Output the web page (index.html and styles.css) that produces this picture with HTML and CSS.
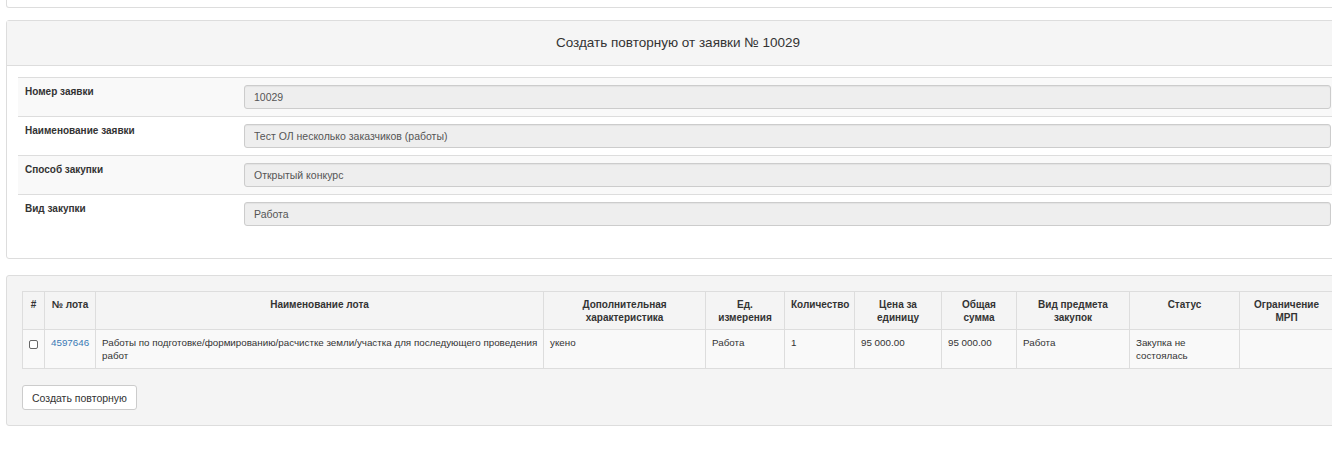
FILE: index.html
```html
<!DOCTYPE html>
<html lang="ru">
<head>
  <meta charset="UTF-8">
  <meta name="viewport" content="width=device-width, initial-scale=1.0">
  <title>Создать повторную</title>
  <link rel="stylesheet" href="styles.css">
</head>
<body>
  <div class="panel panel_top"></div>

  <div class="panel">
    <div class="panel_head">Создать повторную от заявки № 10029</div>
    <div class="panel_body">
      <table class="forma">
        <tr>
          <td class="nazev">Номер заявки</td>
          <td><input class="pole" type="text" value="10029" disabled></td>
        </tr>
        <tr>
          <td class="nazev">Наименование заявки</td>
          <td><input class="pole" type="text" value="Тест ОЛ несколько заказчиков (работы)" disabled></td>
        </tr>
        <tr>
          <td class="nazev">Способ закупки</td>
          <td><input class="pole" type="text" value="Открытый конкурс" disabled></td>
        </tr>
        <tr>
          <td class="nazev">Вид закупки</td>
          <td><input class="pole" type="text" value="Работа" disabled></td>
        </tr>
      </table>
    </div>
  </div>

  <div class="panel panel_well">
    <table class="loty">
      <colgroup>
        <col style="width: 22px">
        <col style="width: 51px">
        <col style="width: 448px">
        <col style="width: 162px">
        <col style="width: 79px">
        <col style="width: 70px">
        <col style="width: 87px">
        <col style="width: 75px">
        <col style="width: 113px">
        <col style="width: 110px">
        <col>
      </colgroup>
      <thead>
        <tr>
          <th>#</th>
          <th>№ лота</th>
          <th>Наименование лота</th>
          <th>Дополнительная характеристика</th>
          <th>Ед. измерения</th>
          <th>Количество</th>
          <th>Цена за единицу</th>
          <th>Общая сумма</th>
          <th>Вид предмета закупок</th>
          <th>Статус</th>
          <th>Ограничение МРП</th>
        </tr>
      </thead>
      <tbody>
        <tr>
          <td><input class="zaskrt" type="checkbox"></td>
          <td><a href="#">4597646</a></td>
          <td>Работы по подготовке/формированию/расчистке земли/участка для последующего проведения работ</td>
          <td>укено</td>
          <td>Работа</td>
          <td>1</td>
          <td>95 000.00</td>
          <td>95 000.00</td>
          <td>Работа</td>
          <td>Закупка не состоялась</td>
          <td></td>
        </tr>
      </tbody>
    </table>

    <button class="tlacitko">Создать повторную</button>
  </div>
</body>
</html>
```

FILE: styles.css
```css
html, body {
  margin: 0;
  padding: 0;
}
body {
  background-color: #fff;
  font-family: "Liberation Sans", Arial, sans-serif;
  font-size: 10px;
  color: #333;
  overflow: hidden;
  padding-left: 6px;
}
.panel {
  width: 1344px;
  border: 1px solid #ddd;
  border-radius: 3px;
  background-color: #fff;
  box-sizing: border-box;
  margin-bottom: 16px;
}
.panel_top {
  height: 8px;
  border-top: none;
  border-radius: 0 0 3px 3px;
  margin-bottom: 12px;
}
.panel_head {
  background-color: #f5f5f5;
  border-bottom: 1px solid #ddd;
  height: 44px;
  line-height: 44px;
  text-align: center;
  font-size: 13.5px;
}
.panel_body {
  padding: 11px 11px 25px 11px;
}
.forma {
  width: 100%;
  border-collapse: collapse;
}
.forma td {
  border-top: 1px solid #ddd;
  padding: 7px;
  vertical-align: top;
}
.forma tr:nth-child(odd) td {
  background-color: #f9f9f9;
}
.forma .nazev {
  width: 205px;
  font-weight: bold;
  line-height: 12px;
  padding-top: 8px;
}
.pole {
  display: block;
  width: 100%;
  height: 24px;
  box-sizing: border-box;
  margin: 0;
  padding: 0 9px;
  border: 1px solid #ccc;
  border-radius: 3px;
  background-color: #eee;
  color: #555;
  font-family: inherit;
  font-size: 10.5px;
  box-shadow: inset 0 1px 1px rgba(0, 0, 0, 0.05);
}
.panel_well {
  background-color: #f4f4f4;
  padding: 15px;
}
.loty {
  width: 1312px;
  table-layout: fixed;
  border-collapse: collapse;
  margin-bottom: 16px;
}
.loty th, .loty td {
  border: 1px solid #ddd;
  padding: 6px 6px 5px 6px;
  line-height: 13px;
  height: 26px;
  vertical-align: top;
}
.loty th {
  font-weight: bold;
  text-align: center;
}
.loty td {
  background-color: #f9f9f9;
  font-size: 9.8px;
  padding: 6px 2px 6px 6px;
}
.loty a {
  color: #3a7ab5;
  text-decoration: none;
}
.zaskrt {
  appearance: none;
  -webkit-appearance: none;
  width: 9px;
  height: 9px;
  margin: 4px 0 0 0;
  border: 1px solid #666;
  border-radius: 2px;
  background-color: #fff;
  display: block;
}
.tlacitko {
  display: block;
  height: 25px;
  width: 115px;
  padding: 0;
  background-color: #fff;
  border: 1px solid #ccc;
  border-radius: 3px;
  font-family: inherit;
  font-size: 10.5px;
  color: #333;
  cursor: pointer;
}
.tlacitko:hover {
  background-color: #e6e6e6;
}
```
